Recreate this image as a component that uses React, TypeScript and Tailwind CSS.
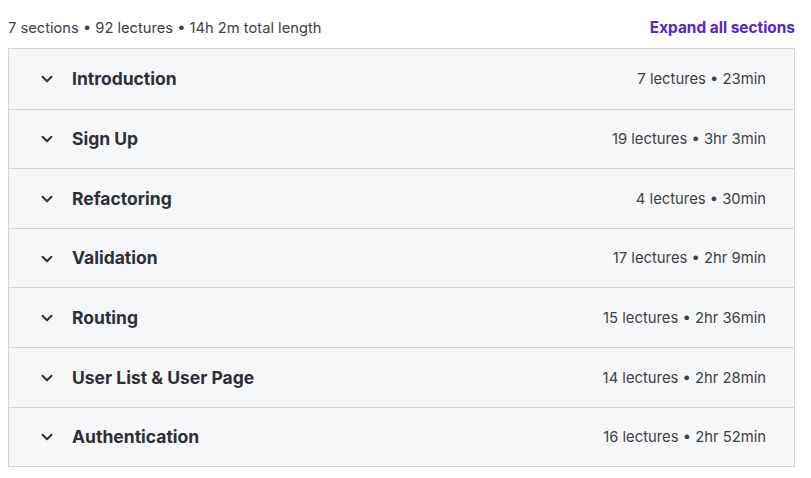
import { ChevronDown } from "lucide-react";

interface Section {
  title: string;
  lectures: number;
  length: string;
}

const sections: Section[] = [
  { title: "Introduction", lectures: 7, length: "23min" },
  { title: "Sign Up", lectures: 19, length: "3hr 3min" },
  { title: "Refactoring", lectures: 4, length: "30min" },
  { title: "Validation", lectures: 17, length: "2hr 9min" },
  { title: "Routing", lectures: 15, length: "2hr 36min" },
  { title: "User List & User Page", lectures: 14, length: "2hr 28min" },
  { title: "Authentication", lectures: 16, length: "2hr 52min" },
];

const SectionRow = ({ section, first }: { section: Section; first: boolean }) => (
  <div
    className={`flex h-[59.6px] items-center bg-[#f6f7f9] pt-[1px] pl-[29px] pr-[28px] ${
      first ? "" : "border-t border-[#d1d7dc]"
    }`}
  >
    <ChevronDown className="h-[18px] w-[18px] text-[#2d2f31]" strokeWidth={2.6} />
    <span className="ml-[16px] text-[17.5px] font-bold text-[#2d2f36]">{section.title}</span>
    <span className="ml-auto text-[14.8px] text-[#3e4143]">
      {section.lectures} lectures • {section.length}
    </span>
  </div>
);

export default function App() {
  return (
    <div className="min-h-screen bg-white pl-2 pr-4 font-['Inter',sans-serif] text-[#2d2f31]">
      <div className="flex items-center justify-between pt-[17px] pb-[9px] leading-[22px]">
        <span className="text-[14.7px] text-[#3e4143]">7 sections • 92 lectures • 14h 2m total length</span>
        <button className="text-[15.4px] font-bold text-[#5624d0]">Expand all sections</button>
      </div>
      <div className="border border-[#d1d7dc]">
        {sections.map((s, i) => (
          <SectionRow key={s.title} section={s} first={i === 0} />
        ))}
      </div>
    </div>
  );
}
